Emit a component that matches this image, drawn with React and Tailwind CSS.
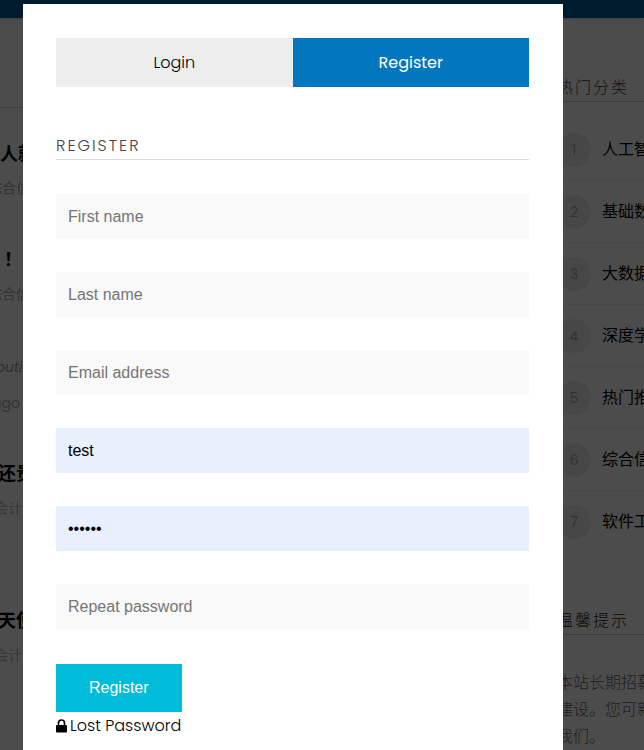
import { useState } from "react";

const categories = ["人工智能", "基础数据", "大数据", "深度学习", "热门推荐", "综合信息", "软件工程"];

const fields = [
  { id: "firstName", label: "First name", type: "text" },
  { id: "lastName", label: "Last name", type: "text" },
  { id: "email", label: "Email address", type: "email" },
  { id: "username", label: "Username", type: "text", filled: true },
  { id: "password", label: "Password", type: "password", filled: true },
  { id: "repeatPassword", label: "Repeat password", type: "password" }
];

const ArticleList = () => (
  <main className="min-w-0 flex-1 whitespace-nowrap">
    <div className="h-[90px] border-b border-[#d8d8d8]" />
    <article className="h-[106px] pt-8">
      <h3 className="text-lg leading-7 font-bold">人就业</h3>
      <p className="mt-[10px] -ml-3 text-sm leading-5 text-[#aaa]">综合信息</p>
    </article>
    <article className="h-[214px] pt-8">
      <h3 className="pl-1 text-lg leading-7 font-bold">！ 最新</h3>
      <p className="mt-[10px] -ml-3 text-sm leading-5 text-[#aaa]">综合信息</p>
      <p className="mt-[53px] -ml-1 text-sm leading-5 text-[#999] italic">outines</p>
      <p className="mt-4 -ml-2 text-sm leading-5 text-[#aaa]">ago</p>
    </article>
    <article className="h-[147px] pt-8">
      <h3 className="-ml-0.5 text-lg leading-7 font-bold">还贵</h3>
      <p className="mt-[10px] -ml-1.5 text-sm leading-5 text-[#bbb]">会计算</p>
    </article>
    <article className="pt-8">
      <h3 className="-ml-0.5 text-lg leading-7 font-bold">天使</h3>
      <p className="mt-[10px] -ml-1.5 text-sm leading-5 text-[#bbb]">会计算</p>
    </article>
  </main>
);

const Sidebar = () => (
  <aside className="w-[87px] shrink-0 whitespace-nowrap">
    <h2 className="mt-[57px] border-b border-[#c8c8c8] text-base leading-[26px] font-light tracking-[2px] text-[#444]">
      热门分类
    </h2>
    <ol className="mt-[17px]">
      {categories.map((name, index) => (
        <li key={name} className="flex h-[62px] items-center gap-[11px] border-b border-[#eee] last:border-0">
          <span className="flex size-[34px] shrink-0 items-center justify-center rounded-full bg-[#eee] text-sm text-[#aaa]">
            {index + 1}
          </span>
          <a href="#category" className="text-base font-normal">
            {name}
          </a>
        </li>
      ))}
    </ol>
    <h2 className="mt-[55px] border-b border-[#c8c8c8] text-base leading-[26px] font-light tracking-[2px] text-[#222]">
      温馨提示
    </h2>
    <p className="mt-[34px] text-base leading-[27px] font-light text-[#666]">
      本站长期招募
      <br />
      建设。您可新
      <br />
      我们。
    </p>
  </aside>
);

const App = () => {
  const [tab, setTab] = useState("register");
  const [values, setValues] = useState({ username: "test", password: "secret" });

  const tabClass = (name) =>
    tab === name ? "bg-[#0277bd] font-normal text-white" : "bg-[#ededed] font-light text-black";

  return (
    <div className="relative h-screen overflow-hidden bg-white font-[Poppins,Inter,'Noto_Sans_CJK_SC',sans-serif] text-black">
      <div className="h-full">
        <header className="h-[18px] bg-[#01579b] shadow" />
        <div className="flex">
          <ArticleList />
          <Sidebar />
        </div>
      </div>

      <div className="absolute inset-0 overflow-hidden bg-black/70 pt-1 pr-[81px] pl-[23px]">
        <div role="dialog" aria-label="Register" className="min-h-full bg-white px-[33px] pt-[34px] pr-[34px]">
          <div className="grid grid-cols-2">
            <button type="button" onClick={() => setTab("login")} className={`h-[49px] ${tabClass("login")}`}>
              Login
            </button>
            <button type="button" onClick={() => setTab("register")} className={`h-[49px] ${tabClass("register")}`}>
              Register
            </button>
          </div>

          <h2 className="mt-[45px] border-b border-[#ddd] text-base leading-[27px] font-light tracking-[2px] text-[#444]">
            REGISTER
          </h2>

          <form className="mt-[34px]" onSubmit={(event) => event.preventDefault()}>
            <div className="flex flex-col gap-[33px]">
              {fields.map((field) => (
                <input
                  key={field.id}
                  id={field.id}
                  type={field.type}
                  aria-label={field.label}
                  placeholder={field.label}
                  value={values[field.id] || ""}
                  onChange={(event) => setValues({ ...values, [field.id]: event.target.value })}
                  className={`h-[45px] w-full px-3 font-['Liberation_Sans',Arial,sans-serif] text-base outline-none placeholder:text-[#757575] ${
                    field.filled ? "bg-[#e8f0fe]" : "bg-[#f9f9f9]"
                  }`}
                />
              ))}
            </div>
            <button
              type="submit"
              className="mt-[35px] block h-12 bg-[#00bcd8] px-[33px] font-['Liberation_Sans',Arial,sans-serif] text-base text-white"
            >
              Register
            </button>
          </form>

          <a href="#lost-password" className="inline-flex items-center gap-[3px] text-base leading-7 font-light">
            <svg viewBox="0 0 11 14" className="h-[14px] w-[11px]" aria-hidden="true">
              <path d="M2.5 7V4a3 3 0 0 1 6 0v3" fill="none" stroke="currentColor" strokeWidth="1.6" />
              <rect y="6" width="11" height="7.5" rx="0.8" fill="currentColor" />
            </svg>
            Lost Password
          </a>
        </div>
      </div>
    </div>
  );
};

export default App;
